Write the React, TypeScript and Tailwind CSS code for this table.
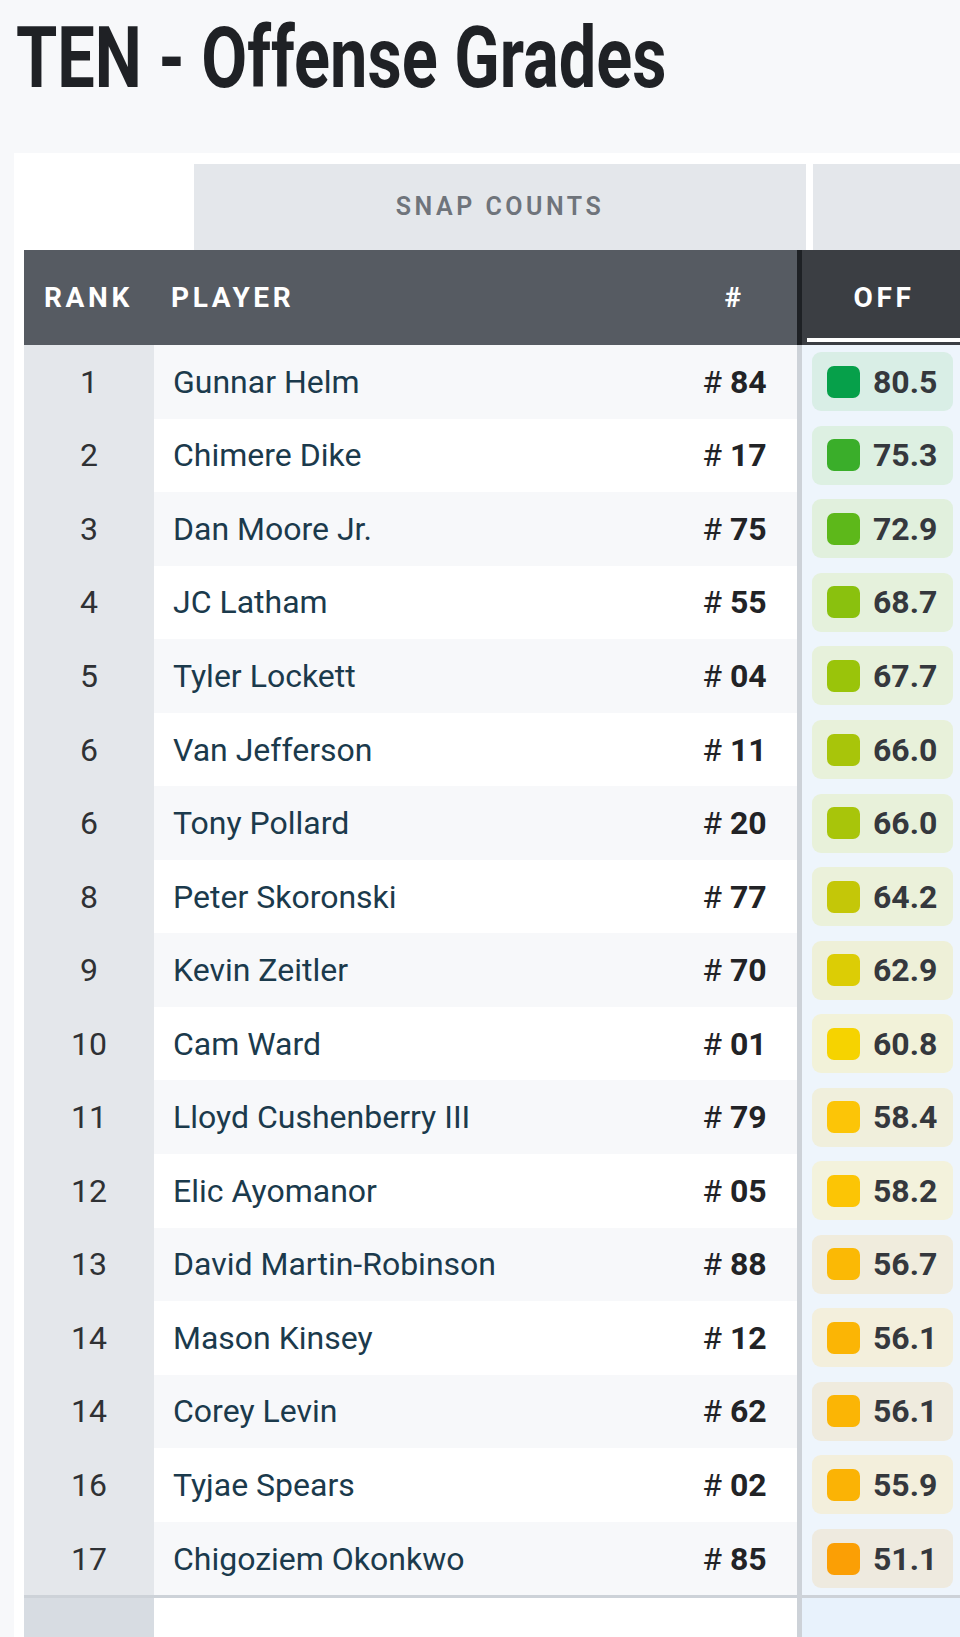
const rows = [
  { rank: "1", name: "Gunnar Helm", num: "84", grade: "80.5", sq: "bg-[#06a04a]", pill: "bg-[#d9eee6]", alt: true },
  { rank: "2", name: "Chimere Dike", num: "17", grade: "75.3", sq: "bg-[#3aae2a]", pill: "bg-[#ddf0e2]", alt: false },
  { rank: "3", name: "Dan Moore Jr.", num: "75", grade: "72.9", sq: "bg-[#5db81a]", pill: "bg-[#e1f0dd]", alt: true },
  { rank: "4", name: "JC Latham", num: "55", grade: "68.7", sq: "bg-[#8ac10e]", pill: "bg-[#e5f1dc]", alt: false },
  { rank: "5", name: "Tyler Lockett", num: "04", grade: "67.7", sq: "bg-[#9ac40a]", pill: "bg-[#e7f1db]", alt: true },
  { rank: "6", name: "Van Jefferson", num: "11", grade: "66.0", sq: "bg-[#a8c50a]", pill: "bg-[#e8f1da]", alt: false },
  { rank: "6", name: "Tony Pollard", num: "20", grade: "66.0", sq: "bg-[#a8c50a]", pill: "bg-[#e8f1da]", alt: true },
  { rank: "8", name: "Peter Skoronski", num: "77", grade: "64.2", sq: "bg-[#c4c708]", pill: "bg-[#ebf1da]", alt: false },
  { rank: "9", name: "Kevin Zeitler", num: "70", grade: "62.9", sq: "bg-[#dccd05]", pill: "bg-[#eef0d8]", alt: true },
  { rank: "10", name: "Cam Ward", num: "01", grade: "60.8", sq: "bg-[#f6d300]", pill: "bg-[#f2f2d9]", alt: false },
  { rank: "11", name: "Lloyd Cushenberry III", num: "79", grade: "58.4", sq: "bg-[#fcc507]", pill: "bg-[#f0efdc]", alt: true },
  { rank: "12", name: "Elic Ayomanor", num: "05", grade: "58.2", sq: "bg-[#fcc505]", pill: "bg-[#f3f2dc]", alt: false },
  { rank: "13", name: "David Martin-Robinson", num: "88", grade: "56.7", sq: "bg-[#fbb905]", pill: "bg-[#f0ecdd]", alt: true },
  { rank: "14", name: "Mason Kinsey", num: "12", grade: "56.1", sq: "bg-[#fbb505]", pill: "bg-[#f3efdc]", alt: false },
  { rank: "14", name: "Corey Levin", num: "62", grade: "56.1", sq: "bg-[#fbb505]", pill: "bg-[#efebde]", alt: true },
  { rank: "16", name: "Tyjae Spears", num: "02", grade: "55.9", sq: "bg-[#fbb305]", pill: "bg-[#f3efdc]", alt: false },
  { rank: "17", name: "Chigoziem Okonkwo", num: "85", grade: "51.1", sq: "bg-[#fb9f05]", pill: "bg-[#eeeadf]", alt: true },
];

const App = () => {
  return (
    <div className="w-full h-[1637px] overflow-hidden bg-[#f7f8fa] font-['Roboto','Liberation_Sans',sans-serif]">
      {/* title */}
      <div className="pt-[15px] pl-[16px] h-[153px]">
        <h1 className="inline-block origin-left scale-x-[0.775] text-[86px] leading-[85px] font-bold text-[#1f2125] whitespace-nowrap">
          TEN - Offense Grades
        </h1>
      </div>

      {/* card */}
      <div className="ml-[14px] w-[1200px] bg-white pl-[10px] pt-[11px]">
        {/* group header */}
        <div className="flex h-[86px]">
          <div className="w-[170px]" />
          <div className="w-[612px] bg-[#e4e7eb] flex items-center justify-center">
            <span className="text-[25px] font-semibold tracking-[0.14em] text-[#6f747b]">SNAP COUNTS</span>
          </div>
          <div className="w-[7px]" />
          <div className="flex-1 bg-[#e4e7eb]" />
        </div>

        {/* column header */}
        <div className="flex h-[95px] text-white text-[28px] font-bold tracking-[0.13em]">
          <div className="w-[773px] bg-[#565b62] flex items-center">
            <div className="w-[130px] pl-[20px]">RANK</div>
            <div className="w-[518px] pl-[17px]">PLAYER</div>
            <div className="w-[125px] text-center">#</div>
          </div>
          <div className="w-[5px] bg-[#1e2125]" />
          <div className="w-[160px] bg-[#3b3e43] flex flex-col">
            <div className="flex-1 flex items-center justify-center pl-[4px] pt-[8px]">OFF</div>
            <div className="ml-[5px] h-[4px] bg-white mb-[3px]" />
          </div>
          <div className="flex-1 bg-[#3b3e43]" />
        </div>

        {/* rows */}
        {rows.map((r, i) => (
          <div key={i} className="flex h-[73.56px] text-[32px]">
            <div className="w-[130px] bg-[#e4e7eb] flex items-center justify-center text-[#2f3134]">
              {r.rank}
            </div>
            <div className={`w-[518px] flex items-center pl-[19px] text-[#1b3a4c] ${r.alt ? "bg-[#f7f8fa]" : "bg-white"}`}>
              {r.name}
            </div>
            <div className={`w-[125px] flex items-center justify-center text-[#222326] ${r.alt ? "bg-[#f7f8fa]" : "bg-white"}`}>
              <span>#</span>
              <span className="ml-[8px] font-bold">{r.num}</span>
            </div>
            <div className="w-[5px] bg-[#cdd2d8]" />
            <div className="w-[160px] bg-[#eef5fc] flex items-center pl-[10px]">
              <div className={`w-[141px] h-[59px] rounded-[9px] flex items-center pl-[15px] ${r.pill}`}>
                <div className={`w-[33px] h-[32px] rounded-[7px] ${r.sq}`} />
                <span className="ml-[13px] font-bold text-[#35383d]">{r.grade}</span>
              </div>
            </div>
            <div className="flex-1 bg-[#eef5fc]" />
          </div>
        ))}

        {/* bottom row */}
        <div className="flex h-[60px] border-t-[3px] border-[#cdd2d8]">
          <div className="w-[130px] bg-[#d7dce2]" />
          <div className="w-[643px] bg-white" />
          <div className="w-[5px] bg-[#cdd2d8]" />
          <div className="flex-1 bg-[#e8f2fc]" />
        </div>
      </div>
    </div>
  );
};

export default App;
